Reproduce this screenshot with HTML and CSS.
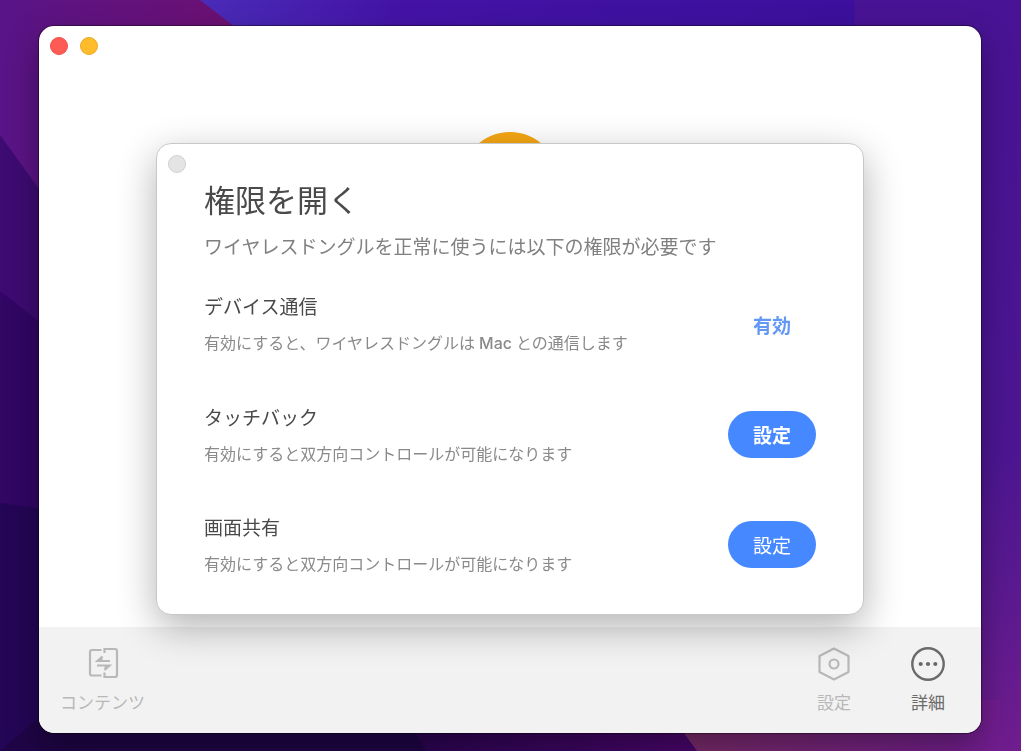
FILE: index.html
```html
<!DOCTYPE html>
<html lang="ja">
<head>
    <meta charset="utf-8">
    <meta name="viewport" content="width=device-width, initial-scale=1">
    <title>権限を開く</title>
    <link rel="stylesheet" href="styles.css">
</head>
<body>

<svg class="wallpaper" viewBox="0 0 1021 751" preserveAspectRatio="none" aria-hidden="true">
    <defs>
        <linearGradient id="plum" x1="0" x2="1" y1="0" y2="0">
            <stop offset="0" stop-color="#591487"/>
            <stop offset="1" stop-color="#6e1070"/>
        </linearGradient>
        <linearGradient id="blue" x1="0" x2="1" y1="0" y2="0">
            <stop offset="0" stop-color="#4a2cb8"/>
            <stop offset="0.3" stop-color="#4413a6"/>
            <stop offset="1" stop-color="#3c109c"/>
        </linearGradient>
        <linearGradient id="right" x1="0" x2="0" y1="0" y2="1">
            <stop offset="0" stop-color="#481394"/>
            <stop offset="0.6" stop-color="#4c1692"/>
            <stop offset="0.8" stop-color="#5c1a90"/>
            <stop offset="1" stop-color="#701d8e"/>
        </linearGradient>
        <linearGradient id="bottom" x1="0" x2="1" y1="0" y2="0">
            <stop offset="0" stop-color="#2a0450"/>
            <stop offset="1" stop-color="#4a066c"/>
        </linearGradient>
        <linearGradient id="rose" x1="0" x2="1" y1="0" y2="0">
            <stop offset="0" stop-color="#7a2c66"/>
            <stop offset="1" stop-color="#711d90"/>
        </linearGradient>
    </defs>
    <rect width="260" height="751" fill="url(#plum)"/>
    <path d="M200 0H860V60H278Z" fill="url(#blue)"/>
    <path d="M855 0H1021V751H840Z" fill="url(#right)"/>
    <path d="M0 135L60 218V751H0Z" fill="#3d0b72"/>
    <path d="M0 291L60 338V751H0Z" fill="#310664"/>
    <path d="M0 503L60 511V751H0Z" fill="#240656"/>
    <path d="M60 700H430V751H0Z" fill="#1f0546"/>
    <path d="M398 700H700V751H426Z" fill="url(#bottom)"/>
    <path d="M660 700H1000V751H697Z" fill="url(#rose)"/>
</svg>

<div class="window">
    <div class="titlebar">
        <button type="button" class="dot red" aria-label="閉じる"></button>
        <button type="button" class="dot yellow" aria-label="しまう"></button>
    </div>

    <div class="stage">
        <div class="badge"></div>
    </div>

    <div class="toolbar">
        <button type="button" class="tool">
            <svg class="tool-icon" viewBox="0 0 36 36" fill="none" stroke="currentColor" stroke-width="2.2">
                <path d="M16.500 5H7Q5 5 5 7V28.500Q5 30.500 7 30.500H16.500"/>
                <path d="M19.500 8V4H30Q32 4 32 6V30Q32 32 30 32H19.500V27.500"/>
                <path d="M25 16H12.500L17.500 11.500M12 20.500H24.500L19.500 25"/>
                <path d="M17.500 11.500V16H12.500ZM19.500 25V20.500H24.500Z" fill="currentColor" stroke="none"/>
            </svg>
            <span>コンテンツ</span>
        </button>
        <div class="tools-right">
            <button type="button" class="tool">
                <svg class="tool-icon" viewBox="0 0 36 36" fill="none" stroke="currentColor" stroke-width="2.2" stroke-linejoin="round">
                    <path d="M18 3.500L32.500 11V27L18 34.500L3.500 27V11Z"/>
                    <circle cx="18" cy="19" r="4.500"/>
                </svg>
                <span>設定</span>
            </button>
            <button type="button" class="tool active">
                <svg class="tool-icon" viewBox="0 0 36 36">
                    <circle cx="18" cy="19" r="15.700" fill="none" stroke="currentColor" stroke-width="2.4"/>
                    <circle cx="10.700" cy="19" r="2.100" fill="currentColor"/>
                    <circle cx="18" cy="19" r="2.100" fill="currentColor"/>
                    <circle cx="25.300" cy="19" r="2.100" fill="currentColor"/>
                </svg>
                <span>詳細</span>
            </button>
        </div>
    </div>

    <div class="dialog" role="dialog" aria-labelledby="dialog-title">
        <button type="button" class="dot gray" aria-label="閉じる"></button>
        <h1 id="dialog-title">権限を開く</h1>
        <p class="lead">ワイヤレスドングルを正常に使うには以下の権限が必要です</p>

        <ul class="permissions">
            <li>
                <div class="info">
                    <h2>デバイス通信</h2>
                    <p>有効にすると、ワイヤレスドングルは<span class="latin">Mac</span>との通信します</p>
                </div>
                <span class="state">有効</span>
            </li>
            <li>
                <div class="info">
                    <h2>タッチバック</h2>
                    <p>有効にすると双方向コントロールが可能になります</p>
                </div>
                <button type="button" class="set strong">設定</button>
            </li>
            <li>
                <div class="info">
                    <h2>画面共有</h2>
                    <p>有効にすると双方向コントロールが可能になります</p>
                </div>
                <button type="button" class="set">設定</button>
            </li>
        </ul>
    </div>
</div>

</body>
</html>
```
FILE: styles.css
```css
*{
    box-sizing: border-box;
}
body{
    margin: 0;
    min-height: 100vh;
    padding: 26px 40px 18px 39px;
    display: flex;
    background-color: #2a0758;
    font-family: "Noto Sans CJK JP", sans-serif;
    color: #4a4a4a;
}
h1, h2, p, ul{
    margin: 0;
    padding: 0;
    font-weight: 400;
}
button{
    border: 0;
    padding: 0;
    background: none;
    font-family: inherit;
    cursor: pointer;
}

/* desktop behind the window */
.wallpaper{
    position: fixed;
    left: 0;
    top: 0;
    width: 100%;
    height: 100%;
}

.window{
    position: relative;
    flex: 1;
    display: flex;
    flex-direction: column;
    background-color: #fff;
    border-radius: 15px;
    box-shadow: 0 0 1px 1px rgba(0,0,0,0.4), 0 14px 32px rgba(0,0,0,0.35);
}
.titlebar{
    display: flex;
    gap: 12px;
    padding: 11px;
}
.dot{
    width: 18px;
    height: 18px;
    border-radius: 50%;
}
.red{
    background-color: #fe5b54;
    border: 1px solid #ee5049;
}
.yellow{
    background-color: #febb2c;
    border: 1px solid #eeac22;
}
.gray{
    position: absolute;
    left: 11px;
    top: 11px;
    background-color: #e4e4e4;
    border: 1px solid #d0d0d0;
}
.stage{
    flex: 1;
    padding-top: 66px;
}
.badge{
    width: 98px;
    height: 98px;
    margin: 0 auto;
    border-radius: 50%;
    background-color: #f5a714;
}

/* bottom bar */
.toolbar{
    display: flex;
    justify-content: space-between;
    padding: 18px 35px 19px 21px;
    background-color: #f2f2f2;
    border-radius: 0 0 15px 15px;
}
.tools-right{
    display: flex;
    gap: 58px;
}
.tool{
    display: flex;
    flex-direction: column;
    align-items: center;
    gap: 9px;
    font-size: 17px;
    line-height: 24px;
    color: #b8b8b8;
}
.tool-icon{
    width: 36px;
    height: 36px;
}
.active{
    color: #6a6a6a;
}

/* permission dialog */
.dialog{
    position: absolute;
    top: 117px;
    left: 117px;
    right: 117px;
    padding: 35px 47px 38px;
    background-color: #fff;
    border: 1px solid #c8c8c8;
    border-radius: 15px;
    box-shadow: 0 12px 38px rgba(0,0,0,0.3);
}
.dialog h1{
    font-size: 31px;
    line-height: 40px;
}
.lead{
    margin-top: 13px;
    font-size: 19px;
    line-height: 28px;
    color: #808080;
}
.permissions{
    margin-top: 32px;
    display: flex;
    flex-direction: column;
    gap: 47px;
    list-style-type: none;
}
.permissions li{
    display: flex;
    align-items: center;
    justify-content: space-between;
}
.info h2{
    font-size: 19px;
    line-height: 28px;
}
.info p{
    margin-top: 9px;
    font-size: 16px;
    line-height: 26px;
    color: #8a8a8a;
}
.latin{
    margin: 0 4px;
    font-family: Inter, sans-serif;
    font-weight: 500;
}
.state, .set{
    width: 88px;
    font-size: 19px;
    line-height: 47px;
    text-align: center;
}
.state{
    font-weight: 700;
    color: #6399f5;
}
.set{
    border-radius: 24px;
    background-color: #4588ff;
    color: #fff;
}
.strong{
    font-weight: 700;
}
```
